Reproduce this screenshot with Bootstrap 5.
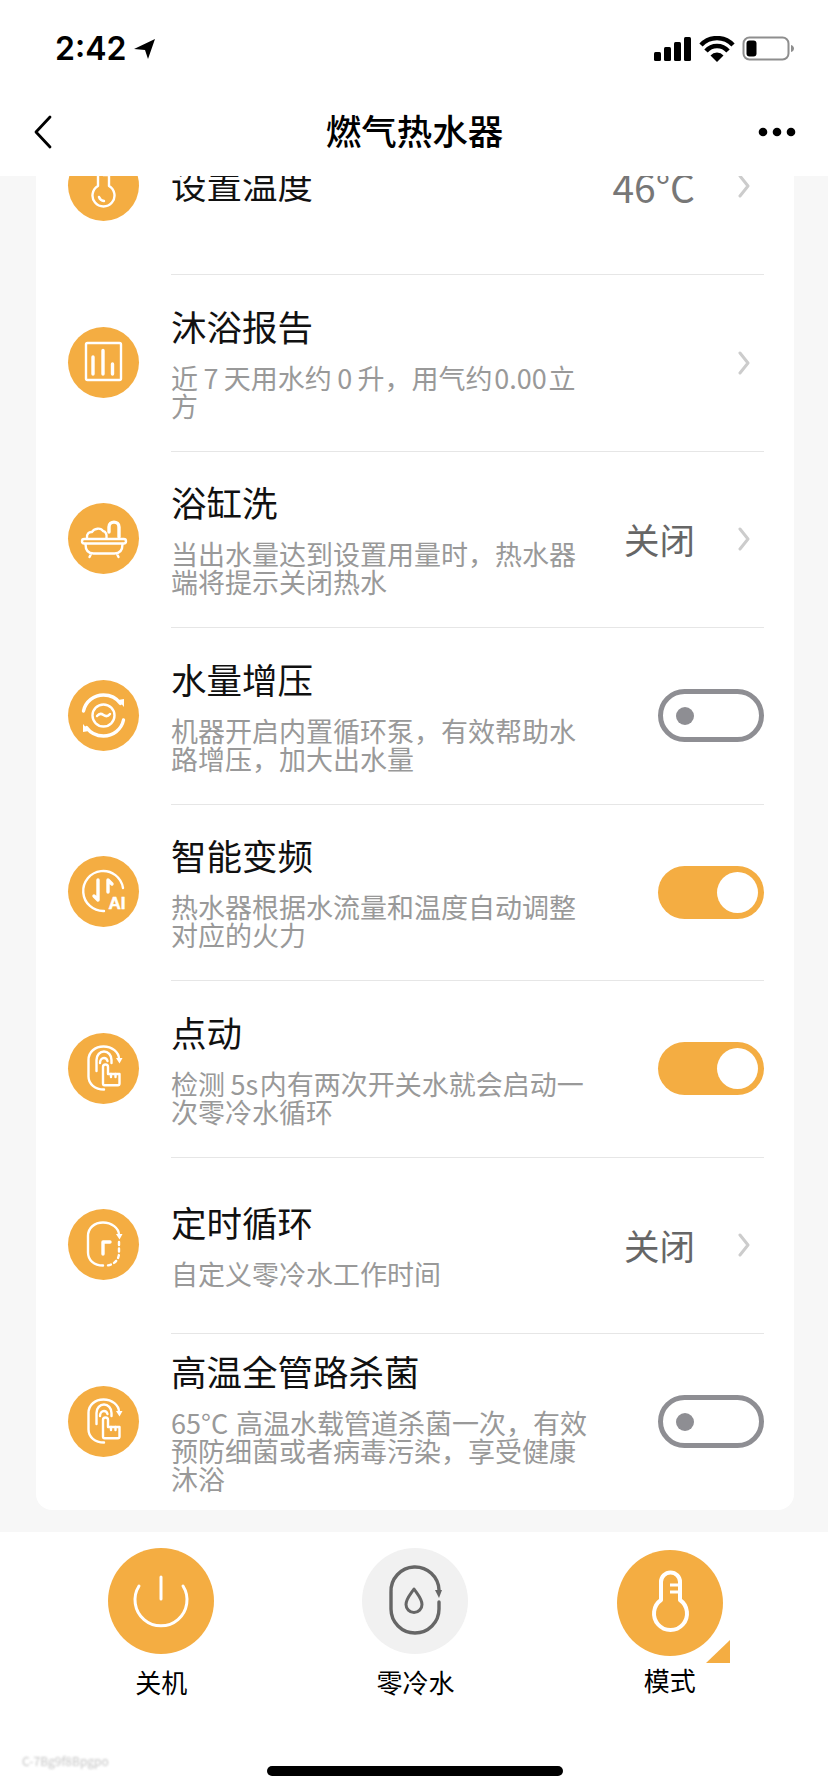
<!DOCTYPE html>
<html lang="zh-CN">
  <head>
    <meta charset="UTF-8" />
    <meta name="viewport" content="width=device-width, initial-scale=1.0" />
    <title>燃气热水器</title>
    <link
      href="https://cdn.jsdelivr.net/npm/bootstrap@5.3.0/dist/css/bootstrap.min.css"
      rel="stylesheet"
    />
    <style>
      body {
        width: 828px;
        height: 1792px;
        overflow: hidden;
        background: #f7f7f7;
        font-family: "Noto Sans CJK SC", "Liberation Sans", sans-serif;
        color: #111;
      }
      .status-bar {
        height: 88px;
        padding: 0 32px 0 55px;
        background: #fff;
      }
      .clock {
        font-family: Inter, "Liberation Sans", sans-serif;
        font-size: 32px;
        font-weight: 600;
        line-height: 1;
        color: #000;
        margin-top: 10px;
      }
      .status-icons { margin-top: 10px; }
      .top-nav {
        height: 88px;
        background: #fff;
        padding: 0 32px 0 33px;
      }
      .nav-side { width: 38px; }
      .nav-title {
        font-size: 35.500px;
        font-weight: 500;
        line-height: 46px;
        color: #000;
        margin-bottom: 4px;
      }
      .scroll-area {
        height: 1356px;
        overflow: hidden;
      }
      .panel {
        margin: -78.5px 34px 0 36px;
        background: #fff;
        border-radius: 16px;
        padding-left: 32px;
      }
      .item { height: 176.5px; }
      .disc {
        width: 71px;
        height: 71px;
        flex: none;
        border-radius: 50%;
        background: #f4ad42;
      }
      .item-body {
        height: 100%;
        margin-left: 32px;
        margin-right: 30px;
        border-top: 1px solid #e6e6e6;
      }
      .item:first-child .item-body { border-top: 0; }
      .item-text {
        width: 420px;
        padding-bottom: 3px;
      }
      .item-title {
        font-size: 35.500px;
        font-weight: 400;
        line-height: 46px;
        margin: 0;
      }
      .item-desc {
        font-size: 27px;
        line-height: 28px;
        color: #999;
        margin: 15px 0 0;
      }
      .item-value {
        font-size: 35.500px;
        line-height: 46px;
        color: #666;
      }
      .item-num {
        font-size: 39px;
        color: #777;
      }
      .chev { margin: 0 14px 0 43px; }
      .sw {
        width: 106px;
        height: 53px;
        border-radius: 27px;
        border: 5px solid #8e8e93;
        padding-left: 13px;
      }
      .sw i {
        width: 18px;
        height: 18px;
        border-radius: 50%;
        background: #8e8e93;
      }
      .sw-on {
        background: #f4ad42;
        border: 0;
        padding: 0 6px 0 0;
      }
      .sw-on i {
        width: 41px;
        height: 41px;
        background: #fff;
      }
      .ic {
        fill: none;
        stroke: #fff;
        stroke-width: 2.4;
        stroke-linecap: round;
        stroke-linejoin: round;
      }
      .ic-bold { stroke-width: 3.4; }
      .ic-solid { fill: #fff; stroke: none; }
      .ai-text {
        font-family: "Liberation Sans", sans-serif;
        font-size: 17px;
        font-weight: 700;
        fill: #fff;
        stroke: #fff;
        stroke-width: .5;
      }
      .dock {
        height: 260px;
        background: #fff;
        padding: 16px 31px 0 34px;
      }
      .dock-btn {
        width: 33.33%;
        font-size: 26px;
        line-height: 34px;
        color: #000;
      }
      .dock-disc {
        width: 106px;
        height: 106px;
        border-radius: 50%;
        background: #f4ad42;
        margin-bottom: 11px;
      }
      .dock-disc-off { background: #f1f1f1; }
      .dock-mode { padding-top: 2px; }
      .dock-mode .dock-disc { margin-bottom: 7px; }
      .corner {
        right: 98px;
        top: 108px;
        border-left: 24px solid transparent;
        border-bottom: 23px solid #f4ad42;
      }
      .home-bar {
        left: 267px;
        bottom: 16px;
        width: 296px;
        height: 10px;
        border-radius: 5px;
        background: #000;
      }
      .smudge {
        left: 22px;
        bottom: 24px;
        font-size: 12px;
        line-height: 14px;
        color: #c4c4c4;
        filter: blur(1.2px);
      }
    </style>
  </head>
  <body>
    <svg width="0" height="0" class="d-block">
      <symbol id="touch" viewBox="0 0 71 71">
        <path class="ic" d="M36 56.500c-9 0-15.500-5.500-15.500-13V27c0-8 6.500-13.500 15-13.500S51 19 51 26" />
        <path class="ic-solid" d="M48 25h6.500l-3 5.500z" />
        <path class="ic" d="M28.500 38V27c0-5 3.500-8.500 7.500-8.500s7.500 3.500 7.500 8.500v3" />
        <path class="ic" d="M32 30c0-3 2-5 4-5s3 1 3.500 3" />
        <path class="ic" d="M35 34a2.500 2.500 0 0 1 5 0v7h11.500v9.500c0 1-.8 1.700-1.700 1.700H36.500c-.8 0-1.500-.7-1.500-1.700z" />
        <path class="ic" d="M43 41v3M47.500 41v3" />
      </symbol>
    </svg>

    <div class="status-bar d-flex align-items-center justify-content-between">
      <div class="d-flex align-items-center gap-2">
        <span class="clock">2:42</span>
        <svg width="22" height="22" viewBox="0 0 22 22" class="status-icons">
          <path d="M0 11 21 1 14 21 11 12z" fill="#000" />
        </svg>
      </div>
      <svg width="142" height="26" viewBox="0 0 142 26" class="status-icons">
        <rect x="0" y="16" width="7" height="9" rx="1.500" fill="#000" />
        <rect x="10" y="11" width="7" height="14" rx="1.500" fill="#000" />
        <rect x="20" y="6" width="7" height="19" rx="1.500" fill="#000" />
        <rect x="30" y="1" width="7" height="24" rx="1.500" fill="#000" />
        <path d="M47 9A22 22 0 0 1 79 9" fill="none" stroke="#000" stroke-width="4.500" />
        <path d="M52 15A14.500 14.500 0 0 1 74 15" fill="none" stroke="#000" stroke-width="4.500" />
        <path d="M56.500 19.500a8.500 8.500 0 0 1 13 0L63 26z" fill="#000" />
        <rect x="89.500" y="1.500" width="45" height="22" rx="6" fill="none" stroke="#8e8e8e" stroke-width="2" />
        <rect x="92.500" y="4.500" width="10" height="16" rx="3" fill="#000" />
        <path d="M137 9c2 .5 3 2 3 3.500s-1 3-3 3.500z" fill="#8e8e8e" />
      </svg>
    </div>

    <nav class="top-nav d-flex align-items-center justify-content-between">
      <div class="nav-side">
        <svg class="d-block" width="20" height="34" viewBox="0 0 20 34">
          <path d="M17 2 3 17l14 15" fill="none" stroke="#000" stroke-width="2.800" stroke-linecap="round" stroke-linejoin="round" />
        </svg>
      </div>
      <div class="nav-title">燃气热水器</div>
      <div class="nav-side">
        <svg class="d-block" width="38" height="10" viewBox="0 0 38 10">
          <circle cx="5" cy="5" r="4.300" fill="#000" />
          <circle cx="19" cy="5" r="4.300" fill="#000" />
          <circle cx="33" cy="5" r="4.300" fill="#000" />
        </svg>
      </div>
    </nav>

    <main class="scroll-area">
      <div class="panel">
        <div class="item d-flex align-items-center">
          <div class="disc">
            <svg width="71" height="71" viewBox="0 0 71 71">
              <path class="ic" d="M30 36V20a5.500 5.500 0 0 1 11 0v16a11 11 0 1 1-11 0z" />
              <path class="ic" d="M35.500 20h5M35.500 25h5M31 47a6 6 0 0 0 5 4" />
            </svg>
          </div>
          <div class="item-body flex-grow-1 d-flex align-items-center">
            <div class="item-text"><h5 class="item-title">设置温度</h5></div>
            <span class="item-value item-num ms-auto">46°C</span>
            <svg class="chev" width="12" height="24" viewBox="0 0 12 24">
              <path d="M2 2l8 10-8 10" fill="none" stroke="#ccc" stroke-width="3" stroke-linecap="round" stroke-linejoin="round" />
            </svg>
          </div>
        </div>

        <div class="item d-flex align-items-center">
          <div class="disc">
            <svg width="71" height="71" viewBox="0 0 71 71">
              <rect class="ic" x="18" y="16" width="35" height="37" rx="1.500" />
              <path class="ic ic-bold" d="M25 30v17M35 23.500v23.500M44.500 37v10" />
            </svg>
          </div>
          <div class="item-body flex-grow-1 d-flex align-items-center">
            <div class="item-text">
              <h5 class="item-title">沐浴报告</h5>
              <p class="item-desc">近&#8201;7&#8201;天用水约&#8201;0&#8201;升，用气约&#8202;0.00&#8202;立方</p>
            </div>
            <svg class="chev ms-auto" width="12" height="24" viewBox="0 0 12 24">
              <path d="M2 2l8 10-8 10" fill="none" stroke="#ccc" stroke-width="3" stroke-linecap="round" stroke-linejoin="round" />
            </svg>
          </div>
        </div>

        <div class="item d-flex align-items-center">
          <div class="disc">
            <svg width="71" height="71" viewBox="0 0 71 71">
              <rect class="ic" x="14" y="36" width="44" height="4.500" rx="2.200" />
              <path class="ic" d="M17.500 41c0 6 3 9.500 8 9.500h21c5 0 8-3.500 8-9.500M23 51l-1.500 3M49 51l1.500 3" />
              <path class="ic ic-bold" d="M41 29v-5c0-6.500 10-6.500 10 0v10" />
              <path class="ic" d="M19 35c-.5-4 2-6.500 5-6 2-4 9-4.500 11-1 3 .5 4 4 3.500 7" />
            </svg>
          </div>
          <div class="item-body flex-grow-1 d-flex align-items-center">
            <div class="item-text">
              <h5 class="item-title">浴缸洗</h5>
              <p class="item-desc">当出水量达到设置用量时，热水器端将提示关闭热水</p>
            </div>
            <span class="item-value ms-auto">关闭</span>
            <svg class="chev" width="12" height="24" viewBox="0 0 12 24">
              <path d="M2 2l8 10-8 10" fill="none" stroke="#ccc" stroke-width="3" stroke-linecap="round" stroke-linejoin="round" />
            </svg>
          </div>
        </div>

        <div class="item d-flex align-items-center">
          <div class="disc">
            <svg width="71" height="71" viewBox="0 0 71 71">
              <path class="ic ic-bold" d="M15.500 31C17.500 21.500 26 15 35.500 15c7 0 13 3 17 8.500" />
              <path class="ic ic-bold" d="M55.500 40C53.500 49.500 45 56 35.500 56c-7 0-13-3-17-8.500" />
              <path class="ic-solid" d="M50 20l6-1v8zM21 51l-6 1v-8z" />
              <circle class="ic" cx="35.500" cy="35.500" r="11" />
              <path class="ic" d="M29 36c2-2.500 4.500-2.500 6.500-1s4.500 1.500 6.500-1" />
            </svg>
          </div>
          <div class="item-body flex-grow-1 d-flex align-items-center">
            <div class="item-text">
              <h5 class="item-title">水量增压</h5>
              <p class="item-desc">机器开启内置循环泵，有效帮助水路增压，加大出水量</p>
            </div>
            <span class="sw ms-auto d-flex align-items-center"><i></i></span>
          </div>
        </div>

        <div class="item d-flex align-items-center">
          <div class="disc">
            <svg width="71" height="71" viewBox="0 0 71 71">
              <path class="ic" d="M36 55A20 20 0 1 1 55 32" />
              <path class="ic ic-bold" d="M30 24v20l-4-4M40 36V24l4 4" />
              <text class="ai-text" x="40.500" y="53">AI</text>
            </svg>
          </div>
          <div class="item-body flex-grow-1 d-flex align-items-center">
            <div class="item-text">
              <h5 class="item-title">智能变频</h5>
              <p class="item-desc">热水器根据水流量和温度自动调整对应的火力</p>
            </div>
            <span class="sw sw-on ms-auto d-flex align-items-center justify-content-end"><i></i></span>
          </div>
        </div>

        <div class="item d-flex align-items-center">
          <div class="disc"><svg width="71" height="71"><use href="#touch" /></svg></div>
          <div class="item-body flex-grow-1 d-flex align-items-center">
            <div class="item-text">
              <h5 class="item-title">点动</h5>
              <p class="item-desc">检测&#8201;5s&#8202;内有两次开关水就会启动一次零冷水循环</p>
            </div>
            <span class="sw sw-on ms-auto d-flex align-items-center justify-content-end"><i></i></span>
          </div>
        </div>

        <div class="item d-flex align-items-center">
          <div class="disc">
            <svg width="71" height="71" viewBox="0 0 71 71">
              <path class="ic" d="M35 56.500c-9 0-15-5.500-15-13V27c0-8 6.500-13.500 15-13.500S51 19 51 26" />
              <path class="ic-solid" d="M48 25h6.500l-3 5.500z" />
              <path class="ic" stroke-dasharray="3 3.500" d="M51 33v11c0 7-5 11.500-12 12.500" />
              <path class="ic ic-bold" d="M35 45V33h7" />
            </svg>
          </div>
          <div class="item-body flex-grow-1 d-flex align-items-center">
            <div class="item-text">
              <h5 class="item-title">定时循环</h5>
              <p class="item-desc">自定义零冷水工作时间</p>
            </div>
            <span class="item-value ms-auto">关闭</span>
            <svg class="chev" width="12" height="24" viewBox="0 0 12 24">
              <path d="M2 2l8 10-8 10" fill="none" stroke="#ccc" stroke-width="3" stroke-linecap="round" stroke-linejoin="round" />
            </svg>
          </div>
        </div>

        <div class="item d-flex align-items-center">
          <div class="disc"><svg width="71" height="71"><use href="#touch" /></svg></div>
          <div class="item-body flex-grow-1 d-flex align-items-center">
            <div class="item-text">
              <h5 class="item-title">高温全管路杀菌</h5>
              <p class="item-desc">65°C&nbsp;&#8202;高温水载管道杀菌一次，有效预防细菌或者病毒污染，享受健康沐浴</p>
            </div>
            <span class="sw ms-auto d-flex align-items-center"><i></i></span>
          </div>
        </div>
      </div>
    </main>

    <footer class="dock d-flex position-relative">
      <div class="dock-btn d-flex flex-column align-items-center">
        <div class="dock-disc">
          <svg width="106" height="106" viewBox="0 0 106 106">
            <path d="M31 38A26 26 0 1 0 75 38M53 29v22" fill="none" stroke="#fff" stroke-width="3" stroke-linecap="round" />
          </svg>
        </div>
        <span>关机</span>
      </div>
      <div class="dock-btn d-flex flex-column align-items-center">
        <div class="dock-disc dock-disc-off">
          <svg width="106" height="106" viewBox="0 0 106 106">
            <path d="M77 42A24 24 0 0 0 29 44V61A24 24 0 0 0 77 61V54" fill="none" stroke="#666" stroke-width="3.400" stroke-linecap="round" />
            <path d="M73 42h7l-3 8z" fill="#666" />
            <path d="M52 41c4 6 8 10 8 15.500a8 8 0 0 1-16 0C44 51 48 47 52 41z" fill="none" stroke="#666" stroke-width="3" stroke-linejoin="round" />
          </svg>
        </div>
        <span>零冷水</span>
      </div>
      <div class="dock-btn dock-mode d-flex flex-column align-items-center">
        <div class="dock-disc">
          <svg width="106" height="106" viewBox="0 0 106 106">
            <path d="M44 50V32a9.500 9.500 0 0 1 19 0V50a16.500 16.500 0 1 1-19 0z" fill="none" stroke="#fff" stroke-width="4" stroke-linejoin="round" />
            <path d="M53 35h10M53 42h10" fill="none" stroke="#fff" stroke-width="3" />
          </svg>
        </div>
        <span>模式</span>
      </div>
      <span class="corner position-absolute"></span>
      <span class="smudge position-absolute">C-7Bg9f8Bpgpo</span>
      <span class="home-bar position-absolute"></span>
    </footer>
  </body>
</html>
